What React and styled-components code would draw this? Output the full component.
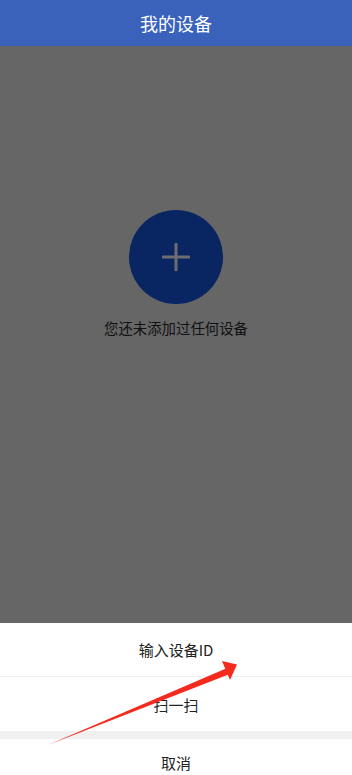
import React from "react";
import styled, { createGlobalStyle } from "styled-components";

const Global = createGlobalStyle`
  html, body { margin: 0; padding: 0; }
  body { font-family: "Noto Sans CJK SC", "Noto Sans", sans-serif; background: #666; overflow: hidden; }
`;

const Page = styled.div`
  position: relative;
  width: 352px;
  height: 775px;
  display: flex;
  flex-direction: column;
  overflow: hidden;
  background: #666666;
`;

const Header = styled.header`
  height: 46px;
  flex: none;
  background: #3a62bb;
  color: #fff;
  display: flex;
  align-items: center;
  justify-content: center;
  font-size: 18px;
`;

const Body = styled.main`
  flex: 1;
  display: flex;
  flex-direction: column;
  align-items: center;
  padding-top: 164px;
`;

const AddButton = styled.div`
  width: 94px;
  height: 94px;
  border-radius: 50%;
  background: #0a2662;
  display: flex;
  align-items: center;
  justify-content: center;
`;

const EmptyText = styled.div`
  margin-top: 14px;
  font-size: 14.4px;
  color: #111;
  line-height: 20px;
`;

const Sheet = styled.div`
  flex: none;
  background: #fff;
  display: flex;
  flex-direction: column;
`;

const SheetItem = styled.div`
  height: ${(p) => p.$h}px;
  display: flex;
  align-items: ${(p) => (p.$top ? "flex-start" : "center")};
  padding-top: ${(p) => (p.$top ? "13px" : "0")};
  box-sizing: border-box;
  justify-content: center;
  font-size: 15px;
  color: #222;
  border-bottom: ${(p) => (p.$line ? "1px solid #f0f0f0" : "none")};
`;

const Gap = styled.div`
  height: 8px;
  background: #f0f0f0;
`;

const Arrow = styled.svg`
  position: absolute;
  left: 0;
  top: 0;
  pointer-events: none;
`;

export default function App() {
  return (
    <>
      <Global />
      <Page>
        <Header>我的设备</Header>
        <Body>
          <AddButton>
            <svg width="28" height="28" viewBox="0 0 28 28">
              <rect x="12.5" y="0" width="3" height="28" fill="#6d6d6d" />
              <rect x="0" y="12.5" width="28" height="3" fill="#6d6d6d" />
            </svg>
          </AddButton>
          <EmptyText>您还未添加过任何设备</EmptyText>
        </Body>
        <Sheet>
          <SheetItem $h={54} $line>输入设备ID</SheetItem>
          <SheetItem $h={54}>扫一扫</SheetItem>
          <Gap />
          <SheetItem $h={36} $top>取消</SheetItem>
        </Sheet>
        <Arrow width="352" height="775" viewBox="0 0 352 775">
          <polygon
            points="48,745 226,668.5 228.5,674.5"
            fill="#f52a1f"
          />
          <polygon points="237,664.5 222,661 230,680" fill="#f52a1f" />
        </Arrow>
      </Page>
    </>
  );
}
